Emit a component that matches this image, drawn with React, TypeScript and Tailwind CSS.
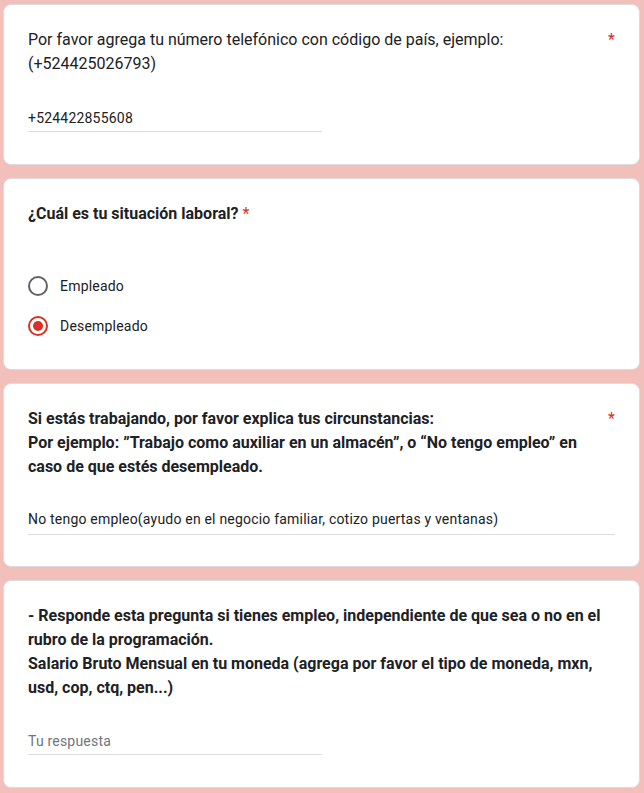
import React from "react";

const Asterisk = () => (
  <span className="text-[#d93025] text-[16px] leading-6 pl-2">*</span>
);

const Radio = ({ label, checked }: { label: string; checked?: boolean }) => (
  <div className="flex items-center h-5">
    <span
      className={
        checked
          ? "w-5 h-5 rounded-full border-2 border-[#d93025] flex items-center justify-center"
          : "w-5 h-5 rounded-full border-2 border-[#5f6368]"
      }
    >
      {checked && <span className="w-[10px] h-[10px] rounded-full bg-[#d93025]" />}
    </span>
    <span className="ml-3 text-[14px] text-[#202124] tracking-[0.2px]">{label}</span>
  </div>
);

const Answer = ({ value, full, pb }: { value: string; full?: boolean; pb?: string }) => (
  <div className={full ? "w-full" : "w-1/2"}>
    <div
      className={
        (value
          ? "text-[14px] leading-5 text-[#202124] tracking-[0.2px] border-b border-[#dadce0] "
          : "text-[14px] leading-5 text-[#70757a] tracking-[0.2px] border-b border-[#dadce0] ") +
        (pb || "pb-[3px]")
      }
    >
      {value || "Tu respuesta"}
    </div>
  </div>
);

const Card = ({ children, className }: { children: React.ReactNode; className: string }) => (
  <div className={"bg-white border border-[#dadce0] rounded-lg px-6 " + className}>{children}</div>
);

export default function App() {
  return (
    <div className="min-h-screen bg-[#f2bfbb] pl-[3px] pr-[4px] pt-[4px] pb-[6px] font-['Roboto',sans-serif]">
      <div className="flex flex-col gap-[13px]">
        <Card className="pt-[23px] pb-[32px]">
          <div className="flex">
            <p className="flex-1 text-[16px] leading-6 text-[#202124]">
              Por favor agrega tu número telefónico con código de país, ejemplo: (+524425026793)
            </p>
            <Asterisk />
          </div>
          <div className="mt-8">
            <Answer value="+524422855608" />
          </div>
        </Card>

        <Card className="pt-[23px] pb-[33px]">
          <p className="text-[16px] leading-6 font-bold text-[#202124]">
            ¿Cuál es tu situación laboral? <span className="text-[#d93025] font-normal">*</span>
          </p>
          <div className="mt-[50px] flex flex-col gap-5">
            <Radio label="Empleado" />
            <Radio label="Desempleado" checked />
          </div>
        </Card>

        <Card className="pt-[23px] pb-[31px]">
          <div className="flex">
            <p className="flex-1 text-[16px] leading-6 font-bold text-[#202124]">
              Si estás trabajando, por favor explica tus circunstancias:
              <br />
              Por ejemplo: ”Trabajo como auxiliar en un almacén”, o “No tengo empleo” en caso de que estés desempleado.
            </p>
            <Asterisk />
          </div>
          <div className="mt-[30px]">
            <Answer
              full
              pb="pb-[5px]"
              value="No tengo empleo(ayudo en el negocio familiar, cotizo puertas y ventanas)"
            />
          </div>
        </Card>

        <Card className="pt-[23px] pb-[32px]">
          <p className="text-[16px] leading-6 font-bold text-[#202124]">
            - Responde esta pregunta si tienes empleo, independiente de que sea o no en el rubro de la programación.
            <br />
            Salario Bruto Mensual en tu moneda (agrega por favor el tipo de moneda, mxn, usd, cop, ctq, pen...)
          </p>
          <div className="mt-[31px]">
            <Answer value="" />
          </div>
        </Card>
      </div>
    </div>
  );
}
